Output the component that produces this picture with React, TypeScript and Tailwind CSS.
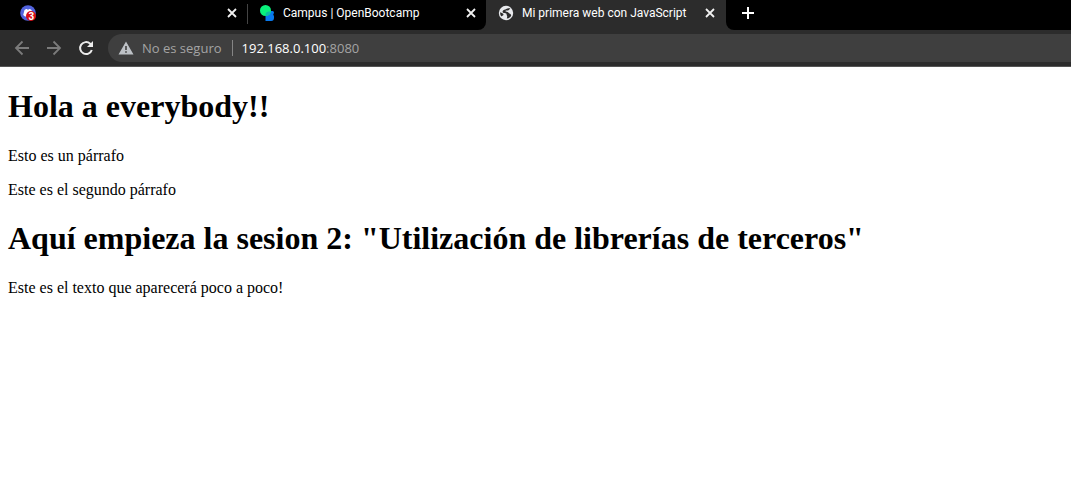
import React from "react";

function CloseButton({ label }: { label: string }) {
  return (
    <button type="button" aria-label={label} className="flex size-4 shrink-0 items-center justify-center text-[#f1f1f1]">
      <svg viewBox="0 0 16 16" className="size-4" fill="none" stroke="currentColor" strokeWidth="1.8">
        <path d="M4 4l8 8M12 4l-8 8" />
      </svg>
    </button>
  );
}

function ChatIcon() {
  return (
    <svg viewBox="0 0 16 16" className="size-4 shrink-0">
      <circle cx="8" cy="8" r="7.8" fill="#5263dd" />
      <path d="M4.500 5c1-.8 2-1 2.600-.9l.4.600h1l.4-.6c1 0 2 .3 2.600.9l1.500 5-2 1.500H5L3.200 10z" fill="#fff" />
      <circle cx="11" cy="11" r="5" fill="#d80f16" />
      <text x="11.200" y="14.500" textAnchor="middle" fontFamily="Liberation Sans, sans-serif" fontSize="10" fontWeight="700" fill="#fff">
        3
      </text>
    </svg>
  );
}

function CampusIcon() {
  return (
    <svg viewBox="0 0 16 16" className="size-4 shrink-0">
      <path d="M7 6h6.500a1.500 1.500 0 0 1 1.300 2.200l-.6 1.600c.9.900 1.100 2.500.7 4-.3 1.400-1.200 2.200-2.500 2.200H6.500V11z" fill="#0879ed" />
      <circle cx="6.500" cy="5.500" r="5.500" fill="#0af27b" />
      <path d="M6.500 11c-.2-2.600.4-4.700 5.400-4.500-.5 2.700-2.600 4.500-5.400 4.500z" fill="#0abea0" />
    </svg>
  );
}

function GlobeIcon() {
  return (
    <svg viewBox="0 0 16 16" className="size-4 shrink-0">
      <circle cx="8" cy="8" r="7.200" fill="#e8eaed" />
      <path
        d="M12.400 3.500C10.800 3 9.300 3.200 8.200 4 7.300 4.800 5.300 4.500 4.700 6.100c-.4 1.300.5 2 1.900 2 1.500.1 2 .5 2 1.500 0 .9.6 1.200.6 2.100l-.4 1.900c1.800-.2 3.300-1.100 4.300-2.600.2-1.500-.6-2.300-1.700-2.600-.8-.2-1-1.200-1.800-1.400l-1.700-.4c-.8-.3-.5-1.100.3-1.100h1.700c1 0 1.100-1.100 2.500-2zM2.200 7.200c-.2 1.600.3 3.100 1.300 4.300.4-1 1.400-.8 1.900-1.600.3-.7-.3-1.200-1-1.600z"
        fill="#2c2c2c"
      />
    </svg>
  );
}

function Tab({ title, icon, closeLabel, className }: { title: string; icon: React.ReactNode; closeLabel: string; className: string }) {
  return (
    <div className={`flex min-w-0 items-center pb-1 ${className}`}>
      {icon}
      <span className="ml-2 min-w-0 flex-1 truncate">{title}</span>
      <CloseButton label={closeLabel} />
    </div>
  );
}

function TabStrip() {
  return (
    <div className="flex h-[30px] bg-[#2c2c2c] font-['Roboto','Noto_Sans',sans-serif] text-[12px] leading-4 text-white">
      <div className="flex w-[486px] rounded-br-lg bg-black">
        <Tab title="" icon={<ChatIcon />} closeLabel="Cerrar pestaña" className="w-[247px] pl-5 pr-[7px]" />
        <div className="mt-1 h-5 w-px bg-[#444]" />
        <Tab title="Campus | OpenBootcamp" icon={<CampusIcon />} closeLabel="Cerrar Campus" className="w-[238px] pl-[11px] pr-[7px]" />
      </div>
      <Tab title="Mi primera web con JavaScript" icon={<GlobeIcon />} closeLabel="Cerrar Mi primera web" className="w-[240px] pl-3 pr-2" />
      <div className="flex flex-1 items-center rounded-bl-lg bg-black pb-1 pl-3.5">
        <button type="button" aria-label="Nueva pestaña" className="text-white">
          <svg viewBox="0 0 16 16" className="size-4" fill="none" stroke="currentColor" strokeWidth="2">
            <path d="M8 2v12M2 8h12" />
          </svg>
        </button>
      </div>
    </div>
  );
}

function Toolbar() {
  return (
    <div className="flex h-[37px] items-center gap-4 border-b border-[#555] bg-[#2c2c2c] pl-3.5 font-['Open_Sans','Noto_Sans',sans-serif]">
      <button type="button" aria-label="Atrás" className="text-[#7b7b7b]">
        <svg viewBox="0 0 16 16" className="size-4" fill="none" stroke="currentColor" strokeWidth="1.8">
          <path d="M15 8H2M8.500 1.500L2 8l6.500 6.500" />
        </svg>
      </button>
      <button type="button" aria-label="Adelante" className="text-[#7b7b7b]">
        <svg viewBox="0 0 16 16" className="size-4" fill="none" stroke="currentColor" strokeWidth="1.8">
          <path d="M1 8h13M7.500 1.500L14 8l-6.500 6.500" />
        </svg>
      </button>
      <button type="button" aria-label="Recargar" className="text-[#ececec]">
        <svg viewBox="0 0 16 16" className="size-4" fill="none" stroke="currentColor" strokeWidth="2">
          <path d="M13.800 10A6 6 0 1 1 12.200 3.700L14 5.500" />
          <path d="M15 1v6H9z" fill="currentColor" stroke="none" />
        </svg>
      </button>
      <div className="-ml-0.5 flex h-7 flex-1 items-center rounded-l-full bg-[#3f3f3f] pl-2.5 text-[13px] leading-5">
        <svg viewBox="0 0 16 16" className="size-4 text-[#bdc1c6]">
          <path fillRule="evenodd" d="M8 1.500L15.500 14.500H.5zM7.200 6v4h1.600V6zM7.200 11.200v1.600h1.600v-1.600z" fill="currentColor" />
        </svg>
        <span className="ml-2 text-[#a4a4a4]">No es seguro</span>
        <div className="ml-2.5 mr-[9px] h-4 w-px bg-[#858585]" />
        <span className="text-white">
          192.168.0.100<span className="text-[#a4a4a4]">:8080</span>
        </span>
      </div>
    </div>
  );
}

export default function App() {
  return (
    <div className="min-h-screen bg-white">
      <header>
        <TabStrip />
        <Toolbar />
      </header>
      <main className="px-2 py-[21px] font-['Liberation_Serif',serif] text-[16px] leading-[18px] text-black">
        <h1 className="text-[32px] font-bold leading-[37px]">Hola a everybody!!</h1>
        <p className="mt-[22px]">Esto es un párrafo</p>
        <p className="mt-4">Este es el segundo párrafo</p>
        <h1 className="mt-[21px] text-[32px] font-bold leading-[37px]">Aquí empieza la sesion 2: "Utilización de librerías de terceros"</h1>
        <p className="mt-[22px]">Este es el texto que aparecerá poco a poco!</p>
      </main>
    </div>
  );
}
